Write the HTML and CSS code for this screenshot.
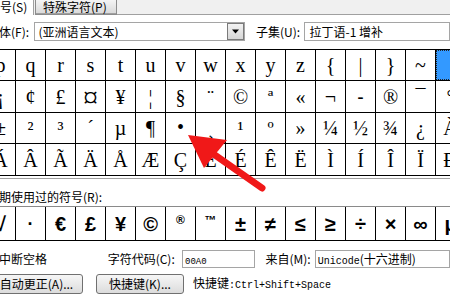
FILE: index.html
```html
<!DOCTYPE html>
<html>
<head>
<meta charset="utf-8">
<link rel="stylesheet" href="styles.css">
</head>
<body>
<div class="dlg">
  <div class="tabs">
    <div class="tab active">符号(S)</div>
    <div class="tab inactive">特殊字符(P)</div>
    <div class="tabfill"></div>
  </div>

  <div class="fontrow">
    <span class="lbl fontlbl">字体(F):</span>
    <div class="combo font"><span class="val">(亚洲语言文本)</span><span class="drop"><svg width="9" height="5" viewBox="0 0 9 5"><path d="M1 0.5h7L4.5 4.5z" fill="#000"/></svg></span></div>
    <span class="lbl sublbl">子集(U):</span>
    <div class="combo subset"><span class="val">拉丁语-1 增补</span></div>
  </div>

  <div class="grid">
    <span>p</span><span>q</span><span>r</span><span>s</span><span>t</span><span>u</span><span>v</span><span>w</span><span>x</span><span>y</span><span>z</span><span>{</span><span>|</span><span>}</span><span>~</span><span class="sel"></span>
    <span>¡</span><span>¢</span><span>£</span><span class="big">¤</span><span>¥</span><span>¦</span><span>§</span><span>¨</span><span>©</span><span>ª</span><span>«</span><span>¬</span><span class="shy">-</span><span>®</span><span>¯</span><span>°</span>
    <span>±</span><span>²</span><span>³</span><span>´</span><span>µ</span><span>¶</span><span class="dot">•</span><span>¸</span><span>¹</span><span>º</span><span>»</span><span>¼</span><span>½</span><span>¾</span><span>¿</span><span>À</span>
    <span>Á</span><span>Â</span><span>Ã</span><span>Ä</span><span>Å</span><span>Æ</span><span>Ç</span><span>È</span><span>É</span><span>Ê</span><span>Ë</span><span>Ì</span><span>Í</span><span>Î</span><span>Ï</span><span>Ð</span>
  </div>
  <div class="sep"></div>

  <div class="lbl recentlbl">近期使用过的符号(R):</div>
  <div class="recent">
    <span>√</span><span class="mid">·</span><span>€</span><span>£</span><span>¥</span><span>©</span><span class="sup">®</span><span class="sup">™</span><span>±</span><span>≠</span><span>≤</span><span>≥</span><span>÷</span><span>×</span><span>∞</span><span>μ</span>
  </div>

  <div class="coderow">
    <span class="lbl namelbl">不中断空格</span>
    <span class="lbl codelbl">字符代码(C):</span>
    <div class="box code"><span class="m small">00A0</span></div>
    <span class="lbl fromlbl">来自(M):</span>
    <div class="box from"><span class="m">Unicode</span>(十六进制)</div>
  </div>

  <div class="btnrow">
    <div class="btn b1">自动更正(A)...</div>
    <div class="btn b2">快捷键(K)...</div>
    <span class="lbl keylbl">快捷键<span class="m">:Ctrl+Shift+Space</span></span>
  </div>

  <svg class="arrow" width="450" height="300" viewBox="0 0 450 300">
    <line x1="262" y1="188" x2="212" y2="153" stroke="#f01818" stroke-width="7" stroke-linecap="round"/>
    <polygon points="188,135 227,140 204,168" fill="#f01818"/>
  </svg>
</div>
</body>
</html>
```

FILE: styles.css
```css
* { box-sizing: border-box; margin: 0; padding: 0; }
html, body { width: 450px; height: 300px; overflow: hidden; background: #fff; }
body {
  font-family: "Noto Sans CJK SC", sans-serif;
  font-size: 12px;
  line-height: 1;
  color: #000;
}
.dlg { position: relative; width: 450px; height: 300px; overflow: hidden; }

.lbl { white-space: nowrap; }
.m { font-family: "Liberation Mono", monospace; font-size: 10px; }
.m.small { font-size: 9px; }

/* tabs */
.tabs { display: flex; height: 15px; background: #f0f0f0; }
.tab { height: 15px; line-height: 13px; white-space: nowrap; }
.tab.active { margin-left: -12px; width: 46px; background: #fff; border-right: 1px solid #a0a0a0; }
.tab.inactive {
  margin-left: 1px; width: 82px; padding-left: 7px;
  border: 1px solid #8c8c8c; border-top: none;
  background: linear-gradient(#f4f4f4, #d8d8d8);
  box-shadow: inset 0 -1px 0 #a0a0a0;
}
.tabfill { flex: 1; border-bottom: 1px solid #a0a0a0; }

/* font row */
.fontrow { display: flex; height: 34px; padding-top: 7px; align-items: flex-start; }
.fontrow .lbl { line-height: 19px; }
.fontlbl { margin-left: -13px; width: 48px; }
.sublbl { margin-left: 11px; width: 50px; }
.combo { height: 19px; border: 1px solid #a5a5a5; background: #fff; display: flex; align-items: center; }
.combo .val { flex: 1; padding-left: 4px; white-space: nowrap; }
.combo.font { width: 218px; }
.combo.subset { width: 150px; }
.drop {
  width: 17px; height: 17px; border: 1px solid #7a7a7a;
  background: linear-gradient(#f2f2f2, #d6d6d6);
  display: flex; align-items: center; justify-content: center;
}

/* symbol grid */
.grid {
  display: grid;
  grid-template-columns: repeat(16, 29px);
  grid-template-rows: 30px 31px 30px 31px;
  gap: 1px;
  background: #000;
  border: 1px solid #000;
  margin-left: -15px;
  width: max-content;
}
.grid span {
  background: #fff;
  display: flex; align-items: center; justify-content: center;
  font-family: "Liberation Serif", serif;
  font-size: 20px;
}
.grid span.sel { background: #3399ff; border: 1px dotted #222; }
.grid span.shy { font-weight: bold; font-size: 18px; }
.grid span.dot { font-size: 20px; padding-bottom: 3px; }
.grid span.big { font-size: 30px; }
.sep { margin-top: 2px; height: 1px; background: #a0a0a0; }

/* recent */
.recentlbl { margin-left: -13px; padding-top: 11px; line-height: 14px; height: 27px; }
.recent {
  display: grid;
  grid-template-columns: repeat(16, 29px);
  grid-template-rows: 33px;
  gap: 1px;
  background: #000;
  padding: 0 1px;
  border-top: 1px solid #8a8a8a;
  border-bottom: 1px solid #000;
  margin-left: -15px;
  width: max-content;
}
.recent span {
  background: #fff;
  display: flex; align-items: center; justify-content: center;
  font-family: "Liberation Sans", sans-serif;
  font-size: 20px;
  font-weight: bold;
}
.recent span.sup { font-size: 12px; align-items: flex-start; padding-top: 7px; }
.recent span.mid { font-size: 18px; }

/* code row */
.coderow { display: flex; align-items: center; height: 18px; margin-top: 9px; }
.namelbl { margin-left: -13px; width: 125px; }
.codelbl { width: 77px; }
.fromlbl { margin-left: 10px; width: 51px; }
.box { height: 18px; border: 1px solid #a5a5a5; background: #fff; padding-left: 2px; line-height: 16px; white-space: nowrap; }
.box.code { width: 76px; }
.box.from { width: 140px; }

/* buttons */
.btnrow { display: flex; align-items: center; height: 20px; margin-top: 6px; }
.btn {
  height: 20px; line-height: 18px; text-align: center; white-space: nowrap;
  border: 1px solid #707070; border-radius: 3px;
  background: linear-gradient(#f6f6f6, #dcdcdc);
}
.b1 { margin-left: -10px; width: 93px; }
.b2 { margin-left: 13px; width: 88px; }
.keylbl { margin-left: 9px; }

.arrow { position: absolute; left: 0; top: 0; pointer-events: none; }
```
